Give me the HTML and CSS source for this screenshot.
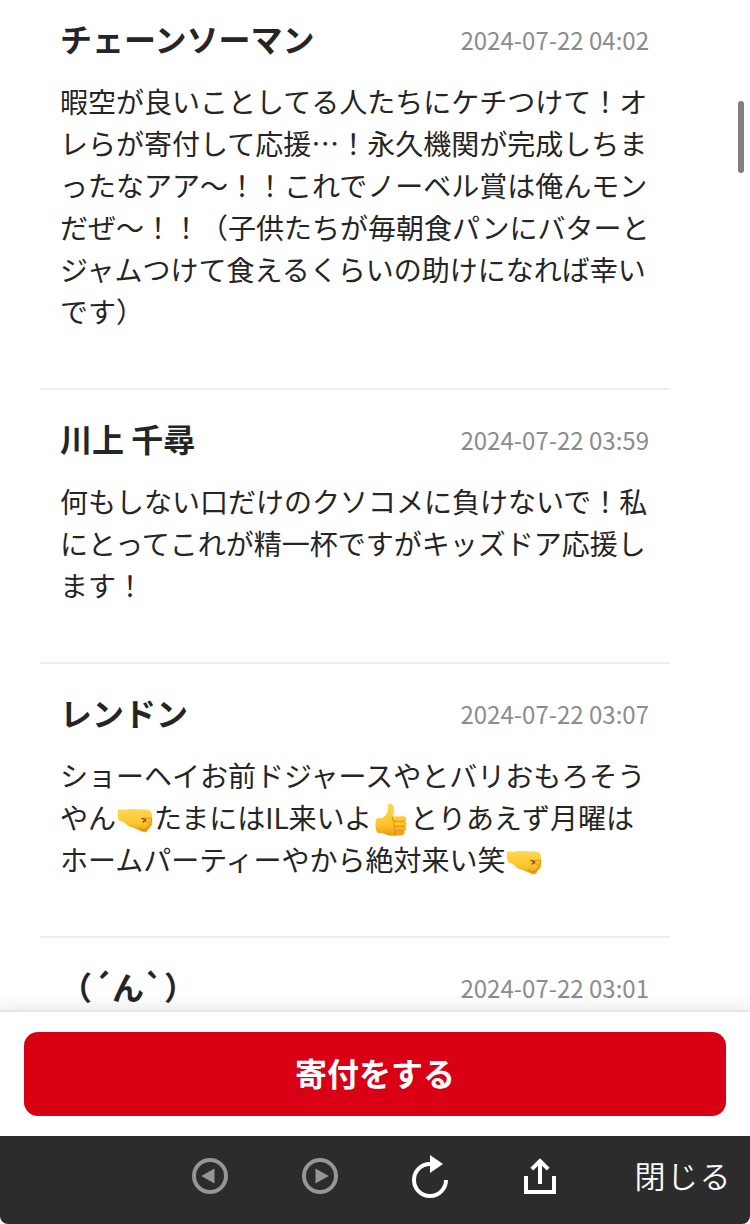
FILE: index.html
```html
<!DOCTYPE html>
<html lang="ja">
<head>
  <meta charset="UTF-8" />
  <meta name="viewport" content="width=device-width, initial-scale=1.0" />
  <title>応援コメント</title>
  <link rel="stylesheet" href="styles.css">
</head>
<body>
  <!-- 絵文字 -->
  <svg class="defs" width="0" height="0" aria-hidden="true">
    <defs>
      <linearGradient id="skin" x1="0" y1="0" x2="0" y2="1">
        <stop offset="0" stop-color="#ffd84f" />
        <stop offset="0.65" stop-color="#fdc42c" />
        <stop offset="1" stop-color="#ee9a12" />
      </linearGradient>
      <symbol id="fist" viewBox="0 0 38 34">
        <path fill="url(#skin)" d="M1.3 6.2C7 7.4 11.500 6.100 16 6.100L29 6.400C32.500 6.600 34.800 8.500 35 12L35.200 20C35 23.500 33.200 25 31.500 25.500C31 28.500 28.500 30 25.500 28.800L15.500 24.500C12.500 24.200 11 23 8.500 20.500C6.500 18.300 4 17.700 2 17.400C.6 13.500.6 9.500 1.300 6.200Z" />
        <path class="crease" d="M24.500 15.300H33.500C35 15.300 35 18.800 33 19.200C31.500 19.500 30.500 19.200 29.500 19M30 25.500C31.500 23 32.500 21.500 34.500 20.500M22 25C25 27.500 28 27.300 31 25.300" />
        <path class="crease-dark" d="M24.500 15.300C28 15.500 28 17.500 25.800 19.500M28.500 15.700V18.800" />
      </symbol>
      <symbol id="thumb" viewBox="0 0 38 34">
        <path fill="url(#skin)" d="M3.500 15.500C6 15.200 8.500 15.500 10 14.500C13 12.300 15 9.500 14.900 6L14.600 2.800C14.600.5 18.500.2 20 2.200C22 5 21 10 20 13.500L30 13.300C33.500 13.300 34.200 17 32.200 18.300C34.500 19.500 34.200 22.300 32.200 23.300C34 24.800 33.200 27.500 31.300 28C32.200 30 31 32 28.500 32.300C22 33 15.500 33 11.500 31C8.500 29.600 6.500 30.500 4 29.800C2 25 2 20 3.500 15.500Z" />
        <path class="crease" d="M20 13.500C18.500 16 19.500 18 22.500 18.300H32.200M22.500 18.300C19.800 19 20 22.600 22.500 23.200H32.200M22.500 23.200C20.300 24 20.500 27.200 23 27.800H31.300M23 27.800C21.500 28.700 21.500 31 23 32" />
      </symbol>
    </defs>
  </svg>

  <main class="comments">
    <article class="comment">
      <div class="comment-head">
        <h2 class="comment-name">チェーンソーマン</h2>
        <time class="comment-date">2024-07-22 04:02</time>
      </div>
      <p class="comment-text">暇空が良いことしてる人たちにケチつけて！オレらが寄付して応援…！永久機関が完成しちまったなアア〜！！これでノーベル賞は俺んモンだぜ〜！！（子供たちが毎朝食パンにバターとジャムつけて食えるくらいの助けになれば幸いです）</p>
    </article>
    <article class="comment">
      <div class="comment-head">
        <h2 class="comment-name">川上 千尋</h2>
        <time class="comment-date">2024-07-22 03:59</time>
      </div>
      <p class="comment-text">何もしない口だけのクソコメに負けないで！私にとってこれが精一杯ですがキッズドア応援します！</p>
    </article>
    <article class="comment">
      <div class="comment-head">
        <h2 class="comment-name">レンドン</h2>
        <time class="comment-date">2024-07-22 03:07</time>
      </div>
      <p class="comment-text">ショーヘイお前ドジャースやとバリおもろそうやん<svg class="emoji"><use href="#fist" /></svg>たまにはIL来いよ<svg class="emoji"><use href="#thumb" /></svg>とりあえず月曜は<br>ホームパーティーやから絶対来い笑<svg class="emoji"><use href="#fist" /></svg></p>
    </article>
    <article class="comment">
      <div class="comment-head">
        <h2 class="comment-name">（´ん`）</h2>
        <time class="comment-date">2024-07-22 03:01</time>
      </div>
    </article>
    <div class="scroll-thumb"></div>
  </main>

  <div class="donate-bar">
    <button class="donate-btn">寄付をする</button>
  </div>

  <nav class="toolbar">
    <button class="tool disabled" aria-label="戻る">
      <svg width="44" height="44" viewBox="0 0 44 44">
        <circle cx="22" cy="22" r="16" fill="none" stroke="currentColor" stroke-width="4" />
        <path fill="currentColor" d="M13.300 22L26.500 14.500V29.500Z" />
      </svg>
    </button>
    <button class="tool disabled" aria-label="進む">
      <svg width="44" height="44" viewBox="0 0 44 44">
        <circle cx="22" cy="22" r="16" fill="none" stroke="currentColor" stroke-width="4" />
        <path fill="currentColor" d="M30.700 22L17.500 14.500V29.500Z" />
      </svg>
    </button>
    <button class="tool" aria-label="再読み込み">
      <svg width="44" height="44" viewBox="0 0 44 44">
        <path fill="none" stroke="currentColor" stroke-width="4" d="M38 26A16 16 0 1 1 22 10" />
        <path fill="currentColor" d="M22 1V19L35 10Z" />
      </svg>
    </button>
    <button class="tool" aria-label="共有">
      <svg width="44" height="44" viewBox="0 0 44 44">
        <path fill="none" stroke="currentColor" stroke-width="4" d="M8 22V38H36V22M22 30V7M13.800 15.200L22 7L30.200 15.200" />
      </svg>
    </button>
    <button class="close-btn">閉じる</button>
  </nav>
</body>
</html>
```
FILE: styles.css
```css
* {
  box-sizing: border-box;
}
body {
  display: flex;
  flex-direction: column;
  height: 1224px;
  margin: 0;
  overflow: hidden;
  background-color: #fff;
  color: #252525;
  font-family: "Noto Sans CJK JP", sans-serif;
}
button {
  border: none;
  padding: 0;
  font-family: inherit;
}
.defs {
  position: absolute;
}
.comments {
  position: relative;
  flex: 1;
  min-height: 0;
  padding: 0 80px 0 40px;
  overflow: hidden;
}
.comment {
  padding: 24px 20px 56px;
  border-bottom: 2px solid #eee;
}
.comment:first-child {
  padding-top: 14px;
}
.comment-head {
  display: flex;
  align-items: center;
  justify-content: space-between;
  height: 48px;
  margin-bottom: 18px;
}
.comment-name {
  margin: 0;
  font-size: 32px;
  font-weight: 700;
  line-height: 48px;
  text-spacing-trim: space-all;
}
.comment-date {
  padding: 4px 1px 0 0;
  color: #8c8c8c;
  font-size: 24px;
  line-height: 36px;
}
.comment-text {
  margin: 0;
  font-size: 28px;
  line-height: 42px;
  line-break: anywhere;
  text-spacing-trim: space-all;
}
.emoji {
  width: 38px;
  height: 34px;
  margin: -10px -1px -10px 1px;
  vertical-align: 2px;
}
.crease,
.crease-dark {
  fill: none;
  stroke: #e08e14;
  stroke-width: 1.1;
}
.crease-dark {
  stroke: #8f4d0c;
  stroke-width: 1.3;
}
.scroll-thumb {
  position: absolute;
  top: 101px;
  right: 6px;
  width: 6px;
  height: 72px;
  border-radius: 3px;
  background-color: #808080;
}
.donate-bar {
  position: relative;
  height: 126px;
  padding: 20px 24px;
  border-top: 2px solid #e6e6e6;
  background-color: #fff;
  box-shadow: 0 0 20px rgba(0, 0, 0, 0.12);
}
.donate-btn {
  width: 100%;
  height: 84px;
  padding-bottom: 4px;
  border-radius: 14px;
  background-color: #d90016;
  color: #fff;
  font-size: 32px;
  font-weight: 700;
}
.toolbar {
  position: relative;
  display: flex;
  align-items: center;
  height: 88px;
  padding: 0 18px 8px 155px;
  border-radius: 0 0 8px 8px;
  background-color: #2c2c2c;
}
.tool {
  display: flex;
  justify-content: center;
  width: 110px;
  background: none;
  color: #fff;
}
.tool.disabled {
  color: #969696;
}
.close-btn {
  margin-left: auto;
  padding-bottom: 3px;
  background: none;
  color: #fff;
  font-size: 31px;
  font-weight: 350;
  letter-spacing: 1.5px;
  white-space: nowrap;
}
```
